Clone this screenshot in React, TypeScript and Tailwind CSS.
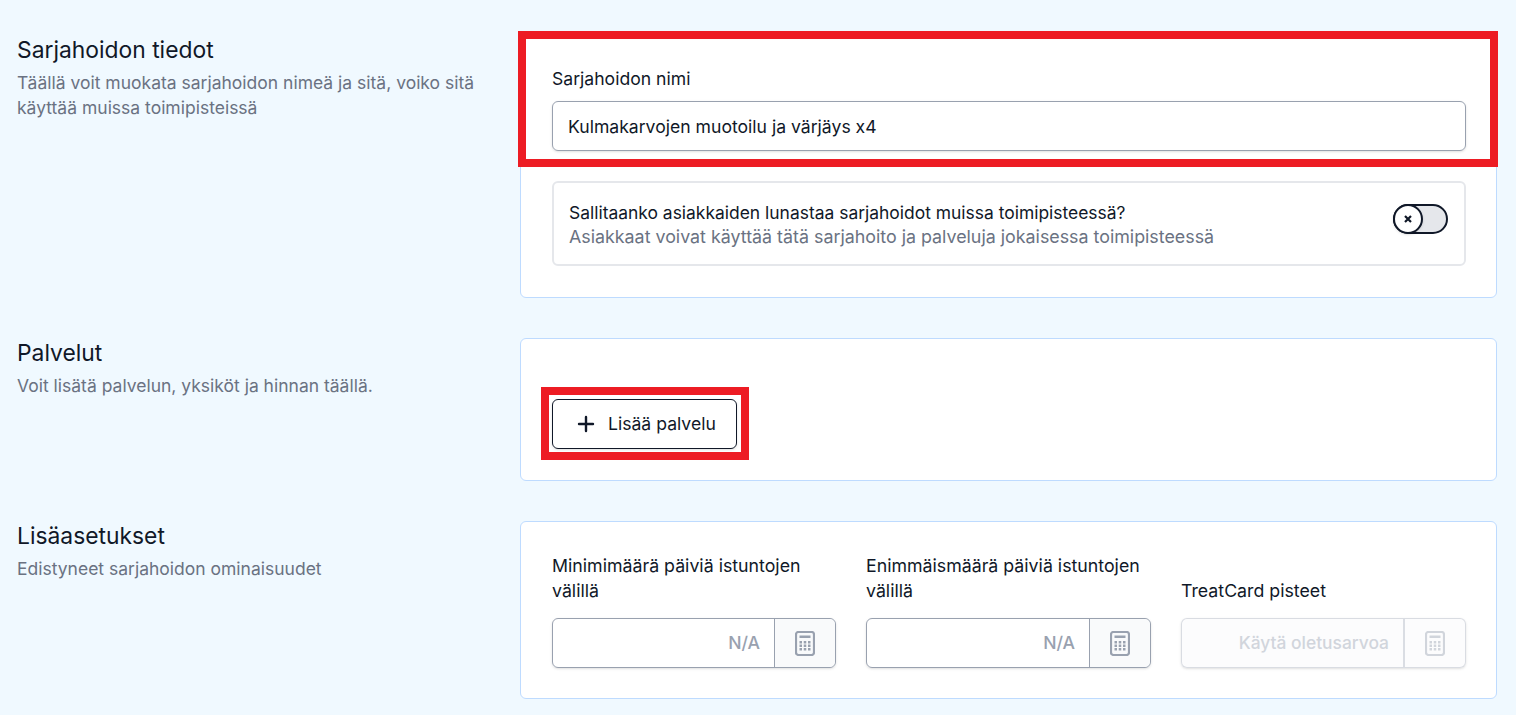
import { Plus } from 'lucide-react';

function CalcIcon({ muted }: { muted?: boolean }) {
  const c = muted ? 'text-gray-300' : 'text-gray-400';
  return (
    <svg className={`w-[20px] h-[25px] ${c}`} viewBox="0 0 20 25" fill="none">
      <rect x="1" y="1" width="18" height="23" rx="2.5" stroke="currentColor" strokeWidth="2.2" />
      <rect x="4.5" y="4.5" width="11" height="2.5" fill="currentColor" />
      {[10, 13.5, 17].map((y) =>
        [4.5, 8.75, 13].map((x) => <rect key={`${x}-${y}`} x={x} y={y} width="2.5" height="2.5" fill="currentColor" />),
      )}
    </svg>
  );
}

function NumberField({ label, value, disabled }: { label: string; value: string; disabled?: boolean }) {
  return (
    <div className="flex flex-col justify-end">
      <label className="text-[17.75px] leading-[25px] text-gray-900 mb-[15px]">{label}</label>
      <div className={`flex h-[50px] rounded-md border shadow-sm ${disabled ? 'border-gray-300/80 bg-gray-50/50' : 'border-gray-400'}`}>
        <div className={`flex-1 flex items-center justify-end pr-[14px] font-medium ${disabled ? 'text-[17.4px] text-gray-300' : 'text-[17.6px] text-gray-400'}`}>{value}</div>
        <div className={`w-[61px] flex items-center justify-center rounded-r-md border-l ${disabled ? 'border-l-2 border-gray-300/80 w-[62px]' : 'border-gray-400 bg-gray-50'}`}>
          <CalcIcon muted={disabled} />
        </div>
      </div>
    </div>
  );
}

function Section({ title, desc, children }: { title: string; desc: string; children: React.ReactNode }) {
  return (
    <div className="flex">
      <div className="w-[503px] shrink-0 pr-[20px]">
        <h2 className="text-[22.85px] leading-[30px] text-gray-900">{title}</h2>
        <p className="text-[17.5px] leading-[25px] mt-[5px] text-gray-500">{desc}</p>
      </div>
      <div className="flex-1 bg-white border border-blue-200 rounded-md pl-[31px] pr-[30px] py-[31px]">{children}</div>
    </div>
  );
}

export default function App() {
  return (
    <div className="h-[715px] overflow-hidden bg-sky-50 pl-[17px] pr-[19px] pt-[35px] flex flex-col gap-[40px] font-['Inter',sans-serif]">
      <Section title="Sarjahoidon tiedot" desc="Täällä voit muokata sarjahoidon nimeä ja sitä, voiko sitä käyttää muissa toimipisteissä">
        <div className="relative">
          <label className="block text-[17.6px] leading-[24px] text-gray-900 mb-[10px]">Sarjahoidon nimi</label>
          <input
            readOnly
            value="Kulmakarvojen muotoilu ja värjäys x4"
            className="w-full h-[50px] px-[15px] text-[17.6px] text-gray-900 border border-gray-400 rounded-md shadow-sm outline-none"
          />
          <div className="absolute -left-[34px] -right-[32px] -top-[36px] -bottom-[16px] border-[8px] border-[#ed1c24] pointer-events-none" />
        </div>
        <div className="mt-[30px] h-[85px] border-2 border-gray-200 rounded-md pl-[15px] pr-[16px] flex items-center justify-between">
          <div className="leading-[24px] pt-[2px]">
            <p className="text-[17.44px] text-gray-900">Sallitaanko asiakkaiden lunastaa sarjahoidot muissa toimipisteessä?</p>
            <p className="text-[17.83px] text-gray-500">Asiakkaat voivat käyttää tätä sarjahoito ja palveluja jokaisessa toimipisteessä</p>
          </div>
          <div className="relative w-[55px] h-[30px] mb-[10px] rounded-full bg-gray-200 border-2 border-gray-900">
            <div className="absolute -left-[2px] -top-[2px] w-[30px] h-[30px] rounded-full bg-white border-2 border-gray-900 shadow flex items-center justify-center">
              <svg className="w-[10px] h-[10px] text-gray-900" viewBox="0 0 10 10" fill="none">
                <path d="M2 2l6 6M8 2l-6 6" stroke="currentColor" strokeWidth="2.2" />
              </svg>
            </div>
          </div>
        </div>
      </Section>

      <Section title="Palvelut" desc="Voit lisätä palvelun, yksiköt ja hinnan täällä.">
        <div className="pt-[29px]">
          <div className="relative w-fit">
            <button className="flex items-center gap-[10px] h-[50px] w-[185px] pl-[21px] border border-gray-900 rounded-md shadow-sm text-[17.6px] text-gray-900">
              <Plus className="w-[24px] h-[24px]" strokeWidth={2.4} />
              Lisää palvelu
            </button>
            <div className="absolute -left-[11px] -right-[12px] -top-[12px] -bottom-[11px] border-[8px] border-[#ed1c24] pointer-events-none" />
          </div>
        </div>
      </Section>

      <Section title="Lisäasetukset" desc="Edistyneet sarjahoidon ominaisuudet">
        <div className="grid grid-cols-[284px_285px_285px] gap-[30px] -mb-px">
          <NumberField label="Minimimäärä päiviä istuntojen välillä" value="N/A" />
          <NumberField label="Enimmäismäärä päiviä istuntojen välillä" value="N/A" />
          <NumberField label="TreatCard pisteet" value="Käytä oletusarvoa" disabled />
        </div>
      </Section>
    </div>
  );
}
